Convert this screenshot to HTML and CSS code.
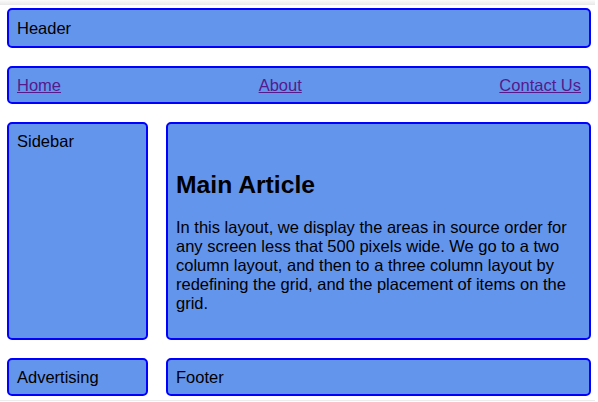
FILE: index.html
```html
<!DOCTYPE html>
<html>
<head>
<meta charset="utf-8">
<link rel="stylesheet" href="styles.css">
</head>
<body>
<div class="topband"></div>
<div class="wrapper">
  <header class="box main-head">Header</header>
  <nav class="box main-nav">
    <a href="#home">Home</a>
    <a href="#about">About</a>
    <a href="#contact">Contact Us</a>
  </nav>
  <aside class="box side">Sidebar</aside>
  <article class="box content">
    <h1>Main Article</h1>
    <p>In this layout, we display the areas in source order for any screen less that 500 pixels wide. We go to a two column layout, and then to a three column layout by redefining the grid, and the placement of items on the grid.</p>
  </article>
  <div class="box ad">Advertising</div>
  <footer class="box main-footer">Footer</footer>
</div>
<div class="bottomline"></div>
</body>
</html>
```

FILE: styles.css
```css
html, body {
  margin: 0;
  padding: 0;
  background: #fff;
}
body {
  font-family: "Liberation Sans", Arial, sans-serif;
  font-size: 16.5px;
  line-height: 19px;
  color: #000;
  width: 598px;
  height: 402px;
  overflow: hidden;
  position: relative;
}
.topband {
  height: 5px;
  margin-right: 3px;
  background: linear-gradient(#fbfbfb, #e8e8e8);
}
.wrapper {
  display: grid;
  grid-template-columns: 141px 1fr;
  column-gap: 18px;
  row-gap: 18px;
  margin: 3px 7px 0 7px;
}
.box {
  background-color: cornflowerblue;
  border: 2px solid blue;
  border-radius: 5px;
  padding: 7.5px 8px;
}
.main-head, .main-nav {
  grid-column: 1 / 3;
}
.main-head {
  padding: 8.5px 8px;
}
.main-nav {
  display: flex;
  justify-content: space-between;
  padding: 7.5px 8px;
}
.main-nav a {
  color: #551a8b;
  text-decoration: underline;
}
.side {
  padding-top: 8px;
}
.content {
  padding: 10px 8px;
}
.content h1 {
  font-size: 24.7px;
  line-height: 28px;
  margin: 37px 0 19px 0;
}
.content p {
  margin: 0 0 15px 0;
}
.bottomline {
  position: absolute;
  left: 0;
  right: 3px;
  top: 400px;
  height: 1px;
  background: #ececec;
}
```
